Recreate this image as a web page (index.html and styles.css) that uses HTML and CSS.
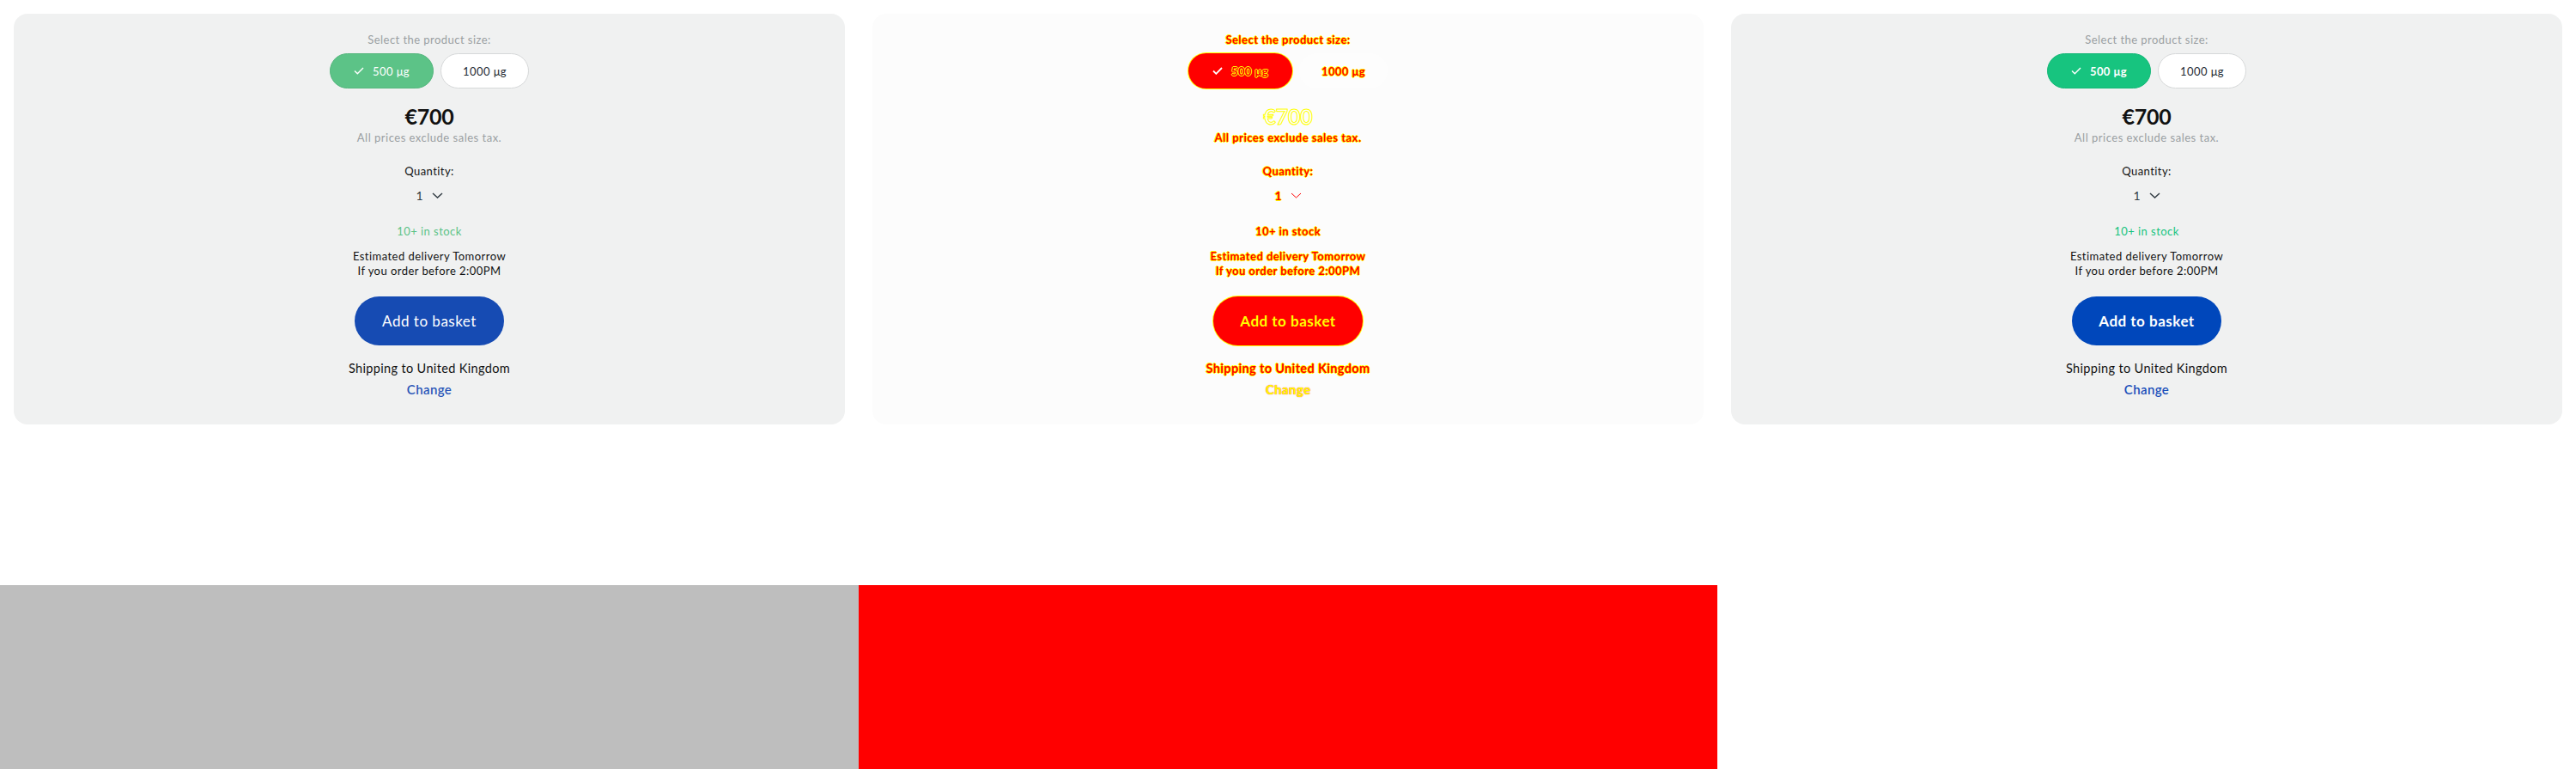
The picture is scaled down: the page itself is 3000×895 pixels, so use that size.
FILE: index.html
```html
<!DOCTYPE html>
<html>
<head>
<meta charset="utf-8">
<link rel="stylesheet" href="styles.css">
</head>
<body>
<div class="row">
  <div class="col">
    <div class="panel before">
      <div class="label muted">Select the product size:</div>
      <div class="pills">
        <div class="pill sel"><svg class="check" width="12" height="9" viewBox="0 0 12 9"><polyline points="1,4.5 4.3,7.8 11,1" fill="none" stroke="currentColor" stroke-width="1.4"/></svg>500 μg</div>
        <div class="pill">1000 μg</div>
      </div>
      <div class="price">€700</div>
      <div class="tax muted">All prices exclude sales tax.</div>
      <div class="qlabel">Quantity:</div>
      <div class="qty"><span>1</span><svg class="chev" width="13" height="7" viewBox="0 0 13 7"><polyline points="1,1 6.5,6 12,1" fill="none" stroke="currentColor" stroke-width="1.5"/></svg></div>
      <div class="stock">10+ in stock</div>
      <div class="delivery">Estimated delivery Tomorrow<br>If you order before 2:00PM</div>
      <div class="btn">Add to basket</div>
      <div class="ship">Shipping to United Kingdom</div>
      <div class="change">Change</div>
    </div>
  </div>
  <div class="col">
    <div class="panel diff">
      <div class="label">Select the product size:</div>
      <div class="pills">
        <div class="pill sel"><svg class="check" width="12" height="9" viewBox="0 0 12 9"><polyline points="1,4.5 4.3,7.8 11,1" fill="none" stroke="#fff" stroke-width="1.8"/></svg>500 μg</div>
        <div class="pill">1000 μg</div>
      </div>
      <div class="price">€700</div>
      <div class="tax">All prices exclude sales tax.</div>
      <div class="qlabel">Quantity:</div>
      <div class="qty"><span>1</span><svg class="chev" width="13" height="7" viewBox="0 0 13 7"><polyline points="1,1 6.5,6 12,1" fill="none" stroke="#f00" stroke-width="1"/></svg></div>
      <div class="stock">10+ in stock</div>
      <div class="delivery">Estimated delivery Tomorrow<br>If you order before 2:00PM</div>
      <div class="btn">Add to basket</div>
      <div class="ship">Shipping to United Kingdom</div>
      <div class="change">Change</div>
    </div>
  </div>
  <div class="col">
    <div class="panel after">
      <div class="label muted">Select the product size:</div>
      <div class="pills">
        <div class="pill sel"><svg class="check" width="12" height="9" viewBox="0 0 12 9"><polyline points="1,4.5 4.3,7.8 11,1" fill="none" stroke="currentColor" stroke-width="1.4"/></svg>500 μg</div>
        <div class="pill">1000 μg</div>
      </div>
      <div class="price">€700</div>
      <div class="tax muted">All prices exclude sales tax.</div>
      <div class="qlabel">Quantity:</div>
      <div class="qty"><span>1</span><svg class="chev" width="13" height="7" viewBox="0 0 13 7"><polyline points="1,1 6.5,6 12,1" fill="none" stroke="currentColor" stroke-width="1.5"/></svg></div>
      <div class="stock">10+ in stock</div>
      <div class="delivery">Estimated delivery Tomorrow<br>If you order before 2:00PM</div>
      <div class="btn">Add to basket</div>
      <div class="ship">Shipping to United Kingdom</div>
      <div class="change">Change</div>
    </div>
  </div>
</div>
<div class="bottom">
  <div class="block gray"></div>
  <div class="block red"></div>
</div>
</body>
</html>
```

FILE: styles.css
```css
html, body {
  margin: 0;
  padding: 0;
  background: #ffffff;
}
body {
  font-family: Lato, "Open Sans", sans-serif;
  color: #111;
}
.row {
  display: grid;
  grid-template-columns: 1000px 1000px 1000px;
}
.col {
  padding: 16px;
}
.panel {
  height: 478px;
  box-sizing: border-box;
  border-radius: 16px;
  display: flex;
  flex-direction: column;
  align-items: center;
  padding-top: 21px;
  text-align: center;
}
.before, .after { background: #f0f1f1; }
.diff { background: #fcfcfc; }

.label { font-size: 13px; line-height: 18px; letter-spacing: 0.45px; }
.muted { color: #9a9fa2; }
.pills { display: flex; gap: 8px; margin-top: 7px; }
.pill {
  height: 41px;
  box-sizing: border-box;
  border-radius: 21px;
  display: flex;
  align-items: center;
  justify-content: center;
  font-size: 13px;
  letter-spacing: 0.45px;
  background: #fff;
  border: 1px solid #d6d8d9;
  color: #1f2b33;
  width: 103px;
}
.pill.sel { width: 121px; color: #fff; }
.check { margin-right: 10px; }
.before .pill.sel { background: #5cc387; border-color: #55b67d; }
.after .pill.sel { background: #17c47f; border-color: #15b877; font-weight: 700; }

.price { font-size: 25px; line-height: 30px; font-weight: 700; margin-top: 17px; letter-spacing: -0.2px; }
.tax { font-size: 13px; line-height: 18px; letter-spacing: 0.5px; margin-top: 1px; }
.qlabel { font-size: 13px; line-height: 18px; letter-spacing: 0.45px; margin-top: 21px; }
.qty { display: flex; align-items: center; gap: 10px; height: 20px; margin-top: 9px; font-size: 14px; color: #333d44; }
.qty .chev { margin-top: 1px; }
.stock { font-size: 13px; line-height: 18px; letter-spacing: 0.45px; margin-top: 23px; }
.before .stock { color: #5cc387; }
.after .stock { color: #17c47f; }
.delivery { font-size: 13px; line-height: 17px; letter-spacing: 0.45px; margin-top: 12px; }
.btn {
  width: 174px;
  height: 57px;
  border-radius: 29px;
  margin-top: 21px;
  display: flex;
  align-items: center;
  justify-content: center;
  font-size: 17px;
  letter-spacing: 0.5px;
  color: #fff;
}
.before .btn { background: #164bb3; }
.after .btn { background: #0047bb; font-weight: 700; }
.ship { font-size: 14.5px; line-height: 20px; letter-spacing: 0.35px; margin-top: 17px; }
.change { font-size: 15px; line-height: 20px; letter-spacing: 0.4px; margin-top: 4px; font-weight: 600; }
.before .change { color: #2a56b8; }
.after .change { color: #1a4fba; }

/* diff panel */
.diff .label, .diff .tax, .diff .qlabel, .diff .stock, .diff .delivery, .diff .ship, .diff .pill, .diff .qty {
  color: #ff0000;
  text-shadow: 1px 0 0 #ffff00, -1px 0 0 #ffff00, 0 1px 0 #ffff00, 0 -1px 0 #ffff00;
  font-weight: 700;
}
.diff .pill { background: #fdfdfd; border: none; }
.diff .pill.sel { background: #ff0000; color: #ff0000; box-shadow: 0 0 0 1px #ffff00; }
.diff .price { color: #fdfdfd; -webkit-text-stroke: 1px #ffff00; }
.diff .btn { background: #ff0000; box-shadow: 0 0 0 1px #ffff00; color: #ffff00; font-weight: 700; text-shadow: 0 0 1px #ff0000; }
.diff .change { color: #ffff00; text-shadow: 0 0 1px #ff0000; font-weight: 700; }

.bottom {
  display: flex;
  margin-top: 171px;
}
.block { width: 1000px; height: 214px; }
.gray { background: #bebebe; }
.red { background: #ff0000; }
```
